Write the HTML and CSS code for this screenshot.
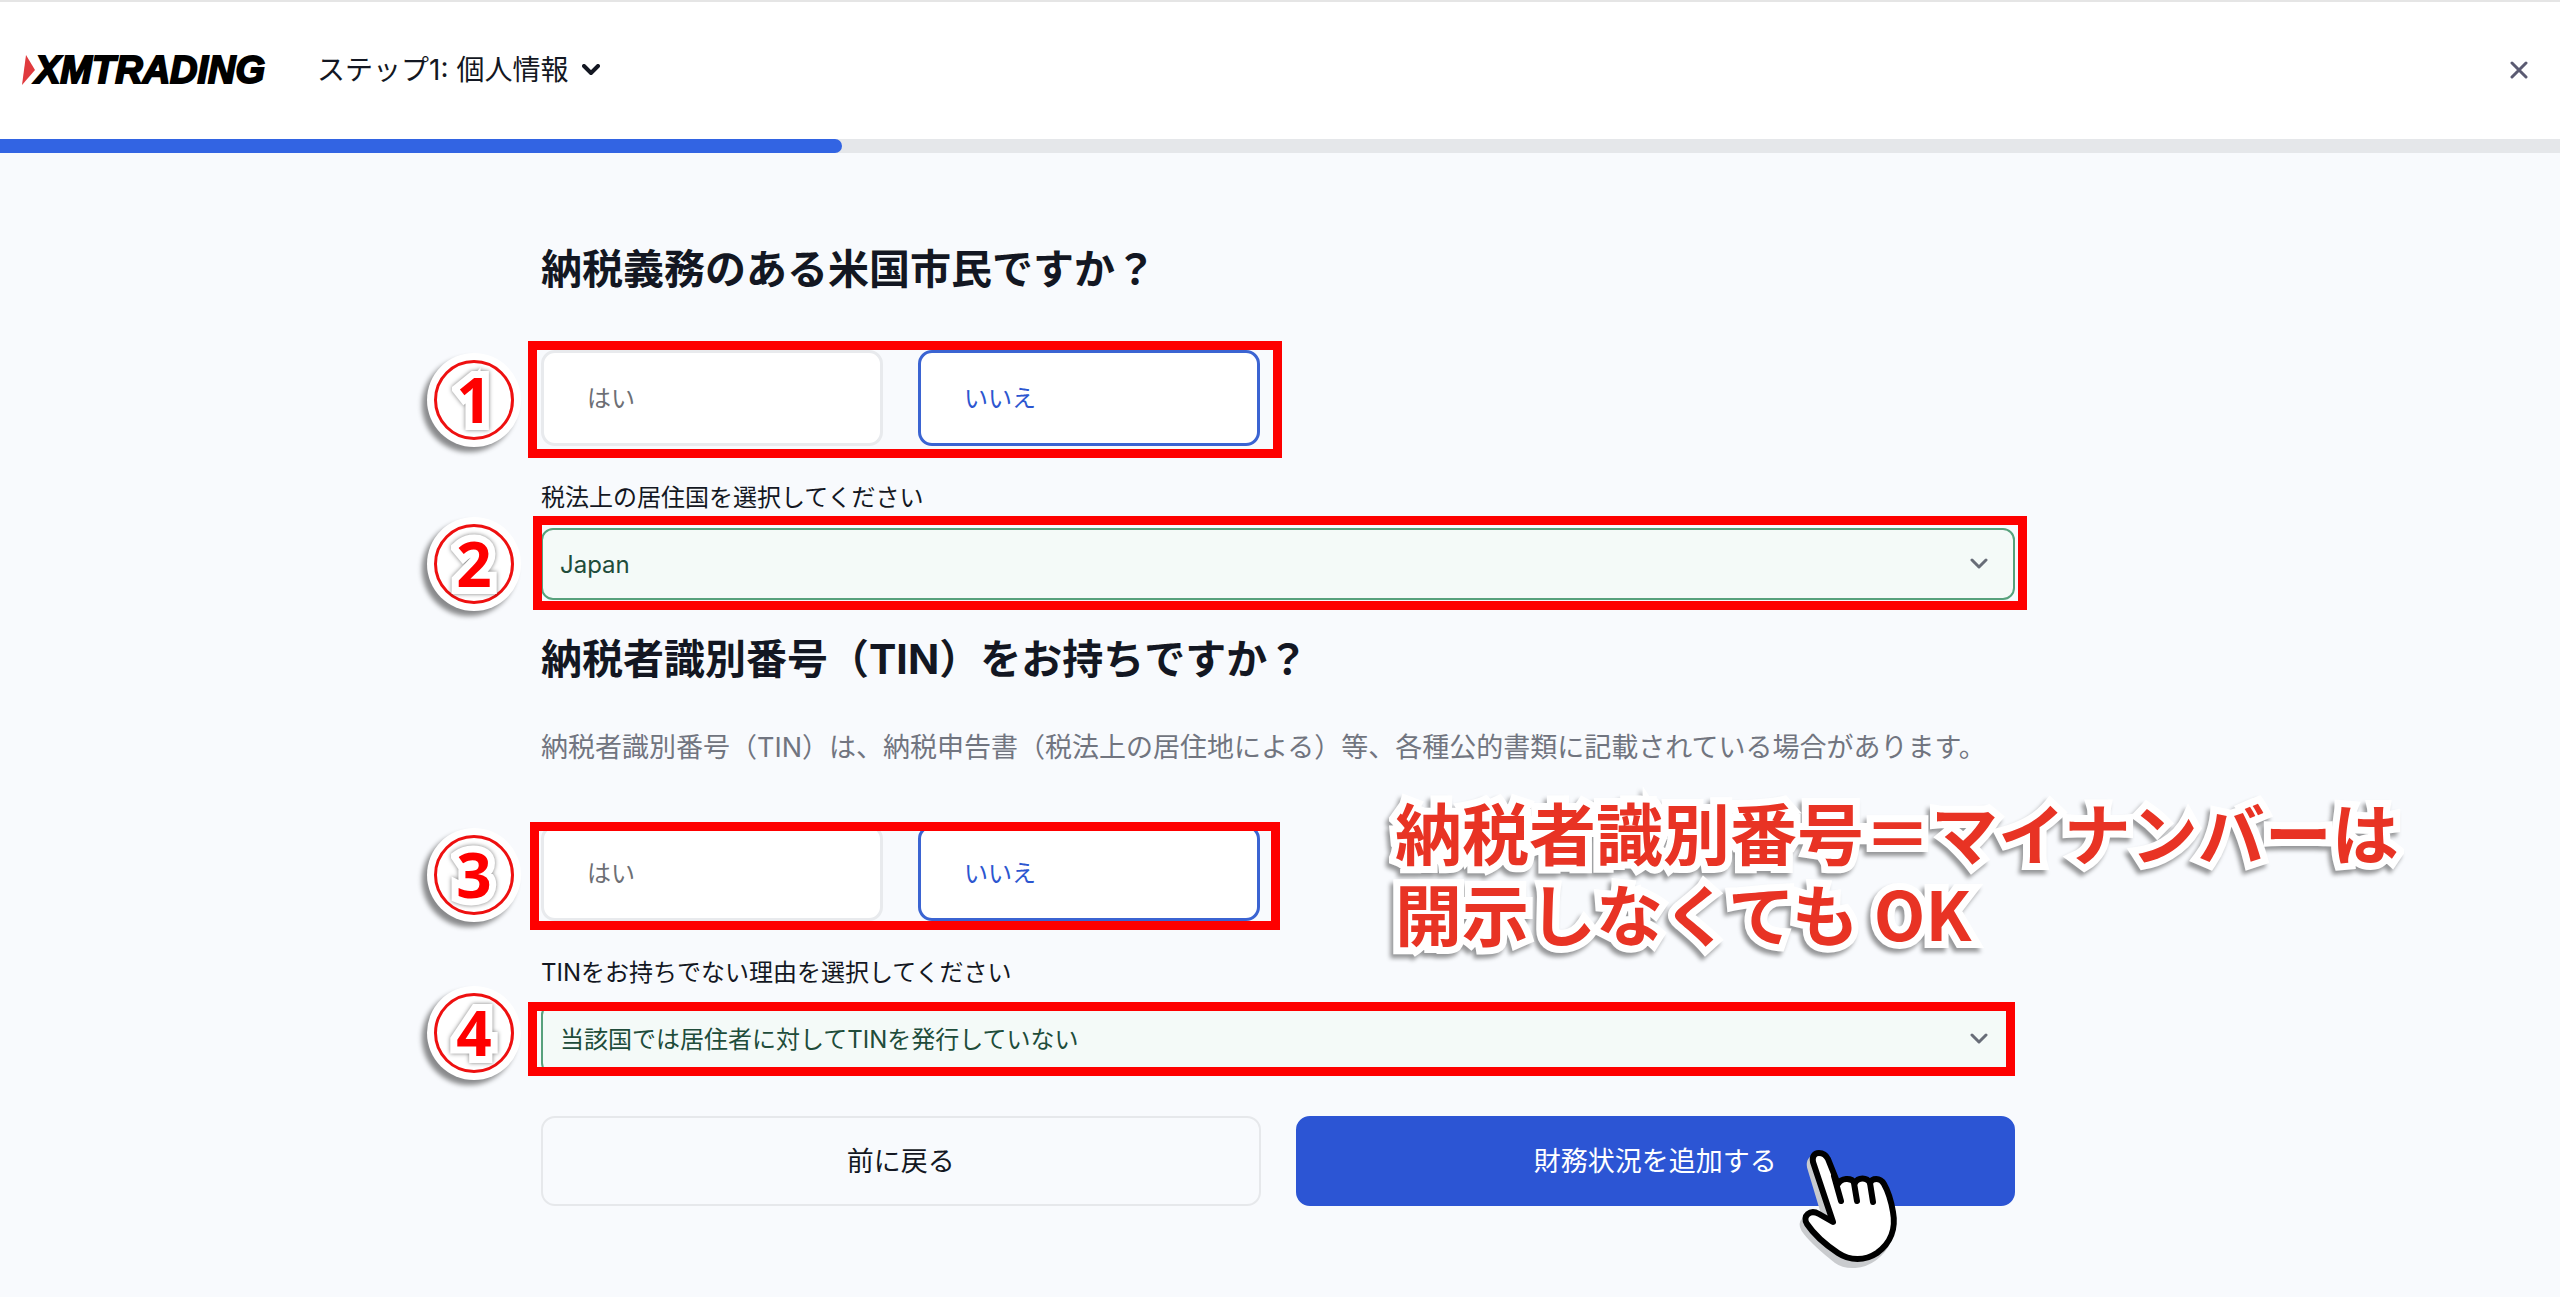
FILE: index.html
```html
<!DOCTYPE html>
<html lang="ja">
<head>
    <meta charset="UTF-8">
    <meta name="viewport" content="width=device-width, initial-scale=1.0">
    <title>XMTrading - ステップ1: 個人情報</title>
    <link rel="stylesheet" href="styles.css">
</head>
<body>
    <header class="header">
        <a class="logo" href="#" aria-label="XMTrading">
            <svg class="logo-mark" viewBox="0 0 13 30" aria-hidden="true"><path d="M4 0 L13 15 L0 30 Z" fill="#e03a3e"/></svg>
            <span>XMTRADING</span>
        </a>
        <button class="step" type="button">
            ステップ1: 個人情報
            <svg class="step-arrow" viewBox="0 0 18 12" aria-hidden="true"><path d="M2 2 L9 9 L16 2"/></svg>
        </button>
        <button class="close" type="button" aria-label="閉じる">
            <svg viewBox="0 0 18 18" aria-hidden="true"><path d="M2 2 L16 16 M16 2 L2 16"/></svg>
        </button>
    </header>
    <div class="progress"><div class="progress-bar" style="width: 32.9%"></div></div>

    <main class="form">
        <h2 id="us-title">納税義務のある米国市民ですか？</h2>
        <div class="options" role="radiogroup" aria-labelledby="us-title">
            <label class="option"><input type="radio" name="us"><span>はい</span></label>
            <label class="option"><input type="radio" name="us" checked><span>いいえ</span></label>
            <div class="frame frame-options"></div>
            <div class="badge"><span>1</span></div>
        </div>

        <label class="field-label" for="country">税法上の居住国を選択してください</label>
        <div class="field">
            <select id="country">
                <option>Japan</option>
            </select>
            <svg class="field-arrow" viewBox="0 0 18 12" aria-hidden="true"><path d="M2 2 L9 9 L16 2"/></svg>
            <div class="frame frame-country"></div>
            <div class="badge"><span>2</span></div>
        </div>

        <h2 id="tin-title" class="second">納税者識別番号（TIN）をお持ちですか？</h2>
        <p class="description">納税者識別番号（TIN）は、納税申告書（税法上の居住地による）等、各種公的書類に記載されている場合があります。</p>
        <div class="options" role="radiogroup" aria-labelledby="tin-title">
            <label class="option"><input type="radio" name="tin"><span>はい</span></label>
            <label class="option"><input type="radio" name="tin" checked><span>いいえ</span></label>
            <div class="frame frame-tin"></div>
            <div class="badge"><span>3</span></div>
            <p class="note">納税者識別番号＝マイナンバーは<br>開示しなくても OK</p>
        </div>

        <label class="field-label" for="reason">TINをお持ちでない理由を選択してください</label>
        <div class="field">
            <select id="reason">
                <option>当該国では居住者に対してTINを発行していない</option>
            </select>
            <svg class="field-arrow" viewBox="0 0 18 12" aria-hidden="true"><path d="M2 2 L9 9 L16 2"/></svg>
            <div class="frame frame-reason"></div>
            <div class="badge badge-reason"><span>4</span></div>
        </div>

        <div class="actions">
            <button class="btn" type="button">前に戻る</button>
            <button class="btn btn-primary" type="submit">財務状況を追加する</button>
            <svg class="pointer" viewBox="0 0 120 140" aria-hidden="true">
                <path class="pointer-shadow" d="M29 15 C24 15 22 19 23 24 L41 84 L27 76 C20 72 13 79 17 86 C25 98 38 108 49 117 C60 125 76 123 87 115 C101 105 106 90 103 74 C101 62 98 53 94 46 C90 40 82 41 81 46 C78 40 69 39 66 46 C62 40 53 40 49 46 L38 21 C36 17 33 15 29 15 Z" transform="translate(-3 5)"/>
                <path class="pointer-hand" d="M29 15 C24 15 22 19 23 24 L43 84 L29 76 C20 71 12 78 17 86 C25 98 36 107 48 115 C60 123 75 123 87 115 C101 105 106 90 103 74 C101 62 98 53 94 46 C90 39 82 40 80 45 C77 39 68 39 65 45 C61 39 51 40 48 46 L38 21 C36 17 33 15 29 15 Z"/>
                <path class="pointer-finger" d="M44 38 L51 63 M64 45 L67 63 M80 45 L83 64"/>
            </svg>
        </div>
    </main>
</body>
</html>
```
FILE: styles.css
```css
* {
    box-sizing: border-box;
}
body {
    margin: 0;
    background-color: #f8fafd;
    color: #131722;
    font-family: Inter, "Noto Sans CJK JP", sans-serif;
    font-size: 24px;
}
button, select {
    font-family: inherit;
    color: inherit;
}
h2, p {
    margin: 0;
}

/* header */
.header {
    display: flex;
    align-items: center;
    height: 139px;
    padding: 0 32px 2px 22px;
    background-color: #fff;
    border-top: 2px solid #e5e5e5;
}
.logo {
    display: flex;
    align-items: center;
    color: #000;
    text-decoration: none;
    font-family: "Liberation Sans", Arial, sans-serif;
    font-size: 38px;
    font-weight: bold;
    font-style: italic;
    line-height: 40px;
    -webkit-text-stroke: 2px #000;
}
.logo-mark {
    width: 13px;
    height: 30px;
}
.step {
    display: flex;
    align-items: center;
    gap: 14px;
    margin-left: 52px;
    padding: 0;
    border: none;
    background: none;
    font-size: 28px;
    line-height: 40px;
}
.step-arrow {
    width: 18px;
    height: 12px;
}
.step-arrow path, .field-arrow path, .close path {
    fill: none;
    stroke: #131722;
    stroke-width: 4;
    stroke-linecap: round;
    stroke-linejoin: round;
}
.close {
    display: flex;
    margin-left: auto;
    padding: 0;
    border: none;
    background: none;
}
.close svg {
    width: 18px;
    height: 18px;
}
.close path {
    stroke: #5b5b72;
    stroke-width: 3;
}
.progress {
    height: 14px;
    background-color: #e5e7ea;
}
.progress-bar {
    height: 14px;
    background-color: #3264e3;
    border-radius: 0 7px 7px 0;
}

/* form */
.form {
    max-width: 1478px;
    margin: 0 auto;
    padding: 92px 4px 88px 0;
}
h2 {
    font-size: 41px;
    font-weight: bold;
    line-height: 48px;
}
.second {
    margin-top: 35px;
}
.description {
    margin-top: 45px;
    color: #717580;
    font-size: 27px;
    line-height: 40px;
    white-space: nowrap;
}
.options {
    position: relative;
    display: flex;
    gap: 35px;
    margin-top: 57px;
}
.option {
    display: flex;
    align-items: center;
    width: 342px;
    height: 96px;
    padding: 0 0 4px 43px;
    background-color: #fff;
    border: 3px solid #e8eaed;
    border-radius: 14px;
    color: #6d6f75;
}
.option input {
    position: absolute;
    opacity: 0;
}
.option:has(input:checked) {
    border-color: #3b64d2;
    color: #2c56d0;
}
.field-label {
    display: block;
    margin-top: 34px;
    line-height: 36px;
}
.field {
    position: relative;
    margin-top: 12px;
}
.field select {
    display: block;
    width: 100%;
    height: 72px;
    padding: 0 60px 0 17px;
    appearance: none;
    background-color: #f4faf8;
    border: 2px solid #57a17c;
    border-radius: 12px;
    color: #204c3a;
    font-size: 24px;
}
.field-arrow {
    position: absolute;
    top: 30px;
    right: 27px;
    width: 18px;
    height: 12px;
}
.field-arrow path {
    stroke: #686d78;
    stroke-width: 3;
}
.actions {
    position: relative;
    display: grid;
    grid-template-columns: 1fr 1fr;
    gap: 35px;
    margin-top: 41px;
}
.btn {
    height: 90px;
    padding-bottom: 4px;
    background-color: transparent;
    border: 2px solid #e6e8eb;
    border-radius: 14px;
    font-size: 27px;
}
.btn-primary {
    background-color: #2c55d4;
    border-color: #2c55d4;
    color: #fff;
}

/* guide marks over the form */
.frame {
    position: absolute;
    border: 9px solid #fe0000;
    pointer-events: none;
}
.frame-options {
    top: -9px;
    bottom: -12px;
    left: -13px;
    width: 754px;
}
.frame-country {
    top: -12px;
    bottom: -10px;
    left: -8px;
    right: -12px;
}
.frame-tin {
    top: -3px;
    bottom: -9px;
    left: -11px;
    width: 750px;
}
.frame-reason {
    top: -1px;
    bottom: -1px;
    left: -13px;
    right: 0;
}
.badge {
    position: absolute;
    top: 50%;
    left: -107px;
    width: 80px;
    height: 80px;
    margin-top: -38px;
    background-color: #fff;
    border: 3px solid #ee1010;
    border-radius: 50%;
    box-shadow: 0 0 0 7px #fff, -5px 5px 5px 7px rgba(0, 0, 0, 0.45);
    color: #fe0000;
    font-family: "Open Sans", sans-serif;
    font-size: 62px;
    font-weight: bold;
    line-height: 72px;
    text-align: center;
}
.field .badge {
    margin-top: -40px;
}
.field .badge-reason {
    margin-top: -46px;
}
.badge span, .note {
    -webkit-text-stroke: 14px #fff;
    paint-order: stroke fill;
    filter: drop-shadow(-3px 4px 2px rgba(0, 0, 0, 0.4));
}
.badge span {
    display: block;
    filter: drop-shadow(0 0 2px rgba(0, 0, 0, 0.5));
}
.note {
    position: absolute;
    top: -35px;
    left: 854px;
    color: #e83324;
    font-family: "Noto Sans CJK JP", sans-serif;
    font-size: 67px;
    font-weight: bold;
    line-height: 81px;
    white-space: nowrap;
}
.pointer {
    position: absolute;
    top: 22px;
    right: 105px;
    width: 120px;
    height: 140px;
}
.pointer-hand {
    fill: #fff;
    stroke: #000;
    stroke-width: 6;
    stroke-linejoin: round;
}
.pointer-finger {
    fill: none;
    stroke: #000;
    stroke-width: 6;
    stroke-linecap: round;
}
.pointer-shadow {
    fill: #c9cbce;
    stroke: #c9cbce;
    stroke-width: 6;
}
```
